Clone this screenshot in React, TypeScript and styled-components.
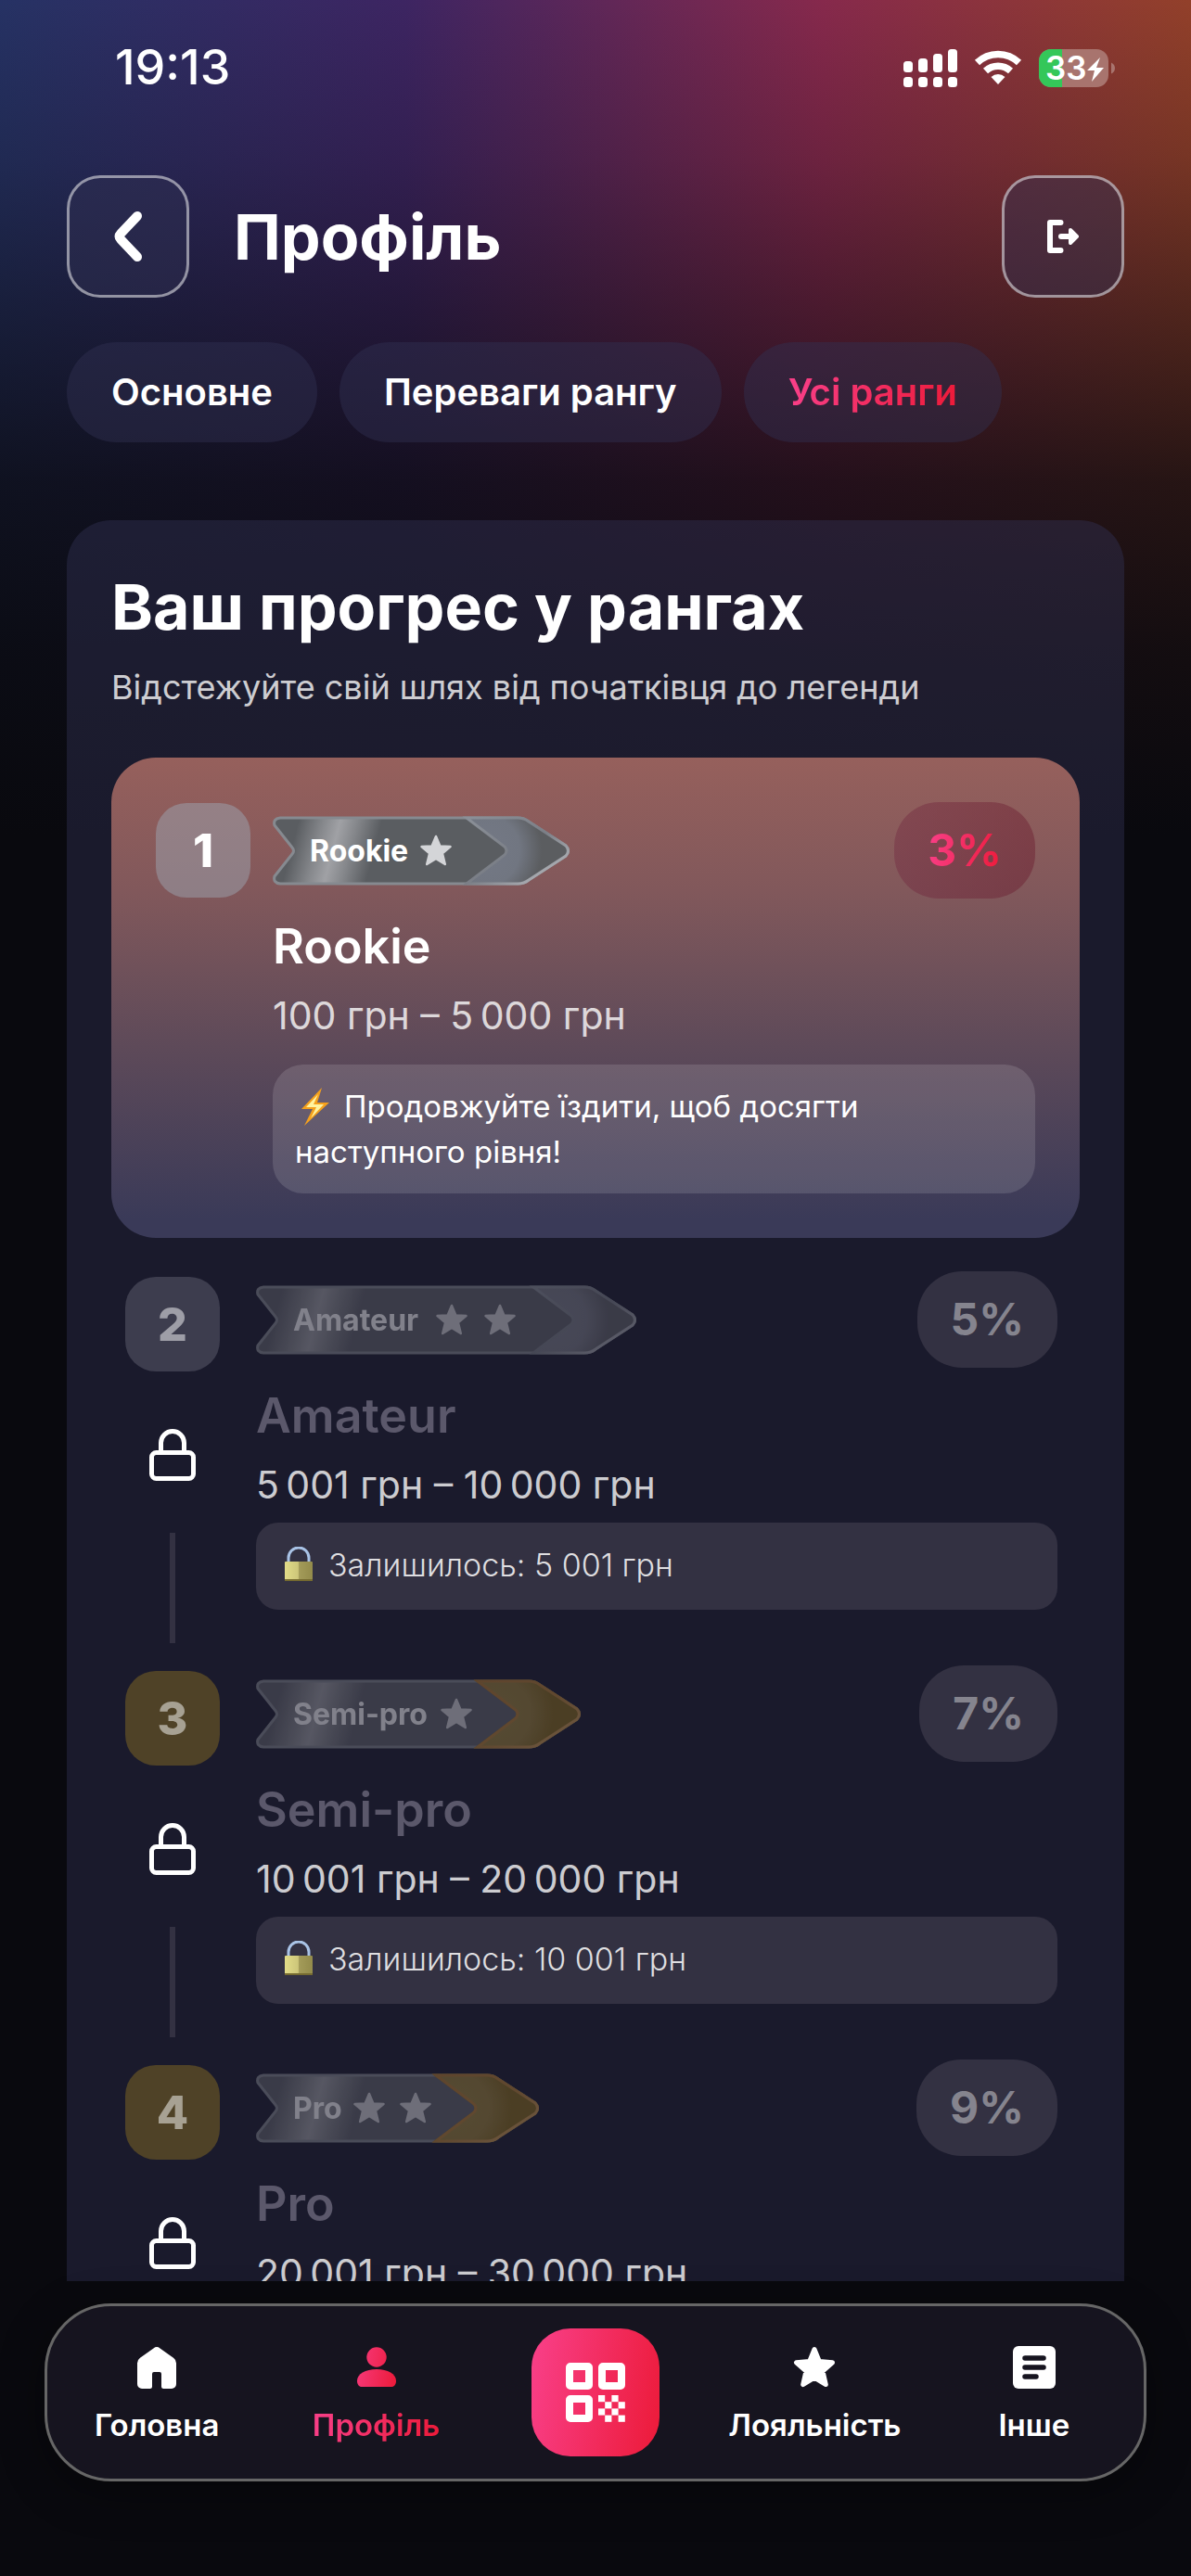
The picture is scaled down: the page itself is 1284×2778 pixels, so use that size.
import React from 'react';
import styled, { createGlobalStyle, css } from 'styled-components';

const GlobalStyle = createGlobalStyle`
  * { box-sizing: border-box; }
  body { margin: 0; background: #09090e; }
  button { font: inherit; color: inherit; border: 0; padding: 0; background: none; cursor: pointer; }
  h1, h2, h3, p, ul, ol { margin: 0; padding: 0; }
  ul, ol { list-style: none; }
`;

const glass = 'rgba(48, 48, 82, 0.45)';
const pinkGradient = 'linear-gradient(100deg, #f9408a 0%, #ec1a38 100%)';

const gradientText = css`
  background: ${pinkGradient};
  background-clip: text;
  -webkit-background-clip: text;
  color: transparent;
`;

const Screen = styled.div`
  height: 100vh;
  display: flex;
  flex-direction: column;
  overflow: hidden;
  color: #fff;
  font-family: Inter, 'Noto Sans', 'Liberation Sans', sans-serif;
  background:
    linear-gradient(
      to bottom,
      rgba(9, 9, 14, 0) 0,
      rgba(9, 9, 14, 0.2) 170px,
      rgba(9, 9, 14, 0.46) 320px,
      rgba(9, 9, 14, 0.79) 520px,
      rgba(9, 9, 14, 0.92) 700px,
      #09090e 900px
    ),
    linear-gradient(to right, #263264 0%, #3d2562 34%, #86294c 69%, #92402a 100%);
`;

const StatusBar = styled.div`
  flex: none;
  height: 146px;
  padding: 0 82px 0 124px;
  display: flex;
  align-items: center;
  justify-content: space-between;
`;

const Clock = styled.time`
  font-size: 52px;
  line-height: 60px;
  font-weight: 500;
`;

const StatusIcons = styled.div`
  display: flex;
  align-items: center;
  gap: 18px;
`;

const Header = styled.header`
  flex: none;
  display: flex;
  align-items: center;
  gap: 48px;
  padding: 43px 72px 48px;
`;

const IconButton = styled.button`
  width: 132px;
  height: 132px;
  display: grid;
  place-items: center;
  border: 3px solid rgba(255, 255, 255, 0.5);
  border-radius: 36px;
  background: ${glass};
`;

const Title = styled.h1`
  flex: 1;
  font-size: 68px;
  line-height: 80px;
  font-weight: 700;
`;

const Tabs = styled.nav`
  flex: none;
  display: flex;
  gap: 24px;
  padding: 0 72px;
`;

const Tab = styled.button`
  height: 108px;
  padding: 0 48px;
  border-radius: 54px;
  background: ${glass};
  font-size: 40px;
  line-height: 48px;
  font-weight: 600;
  white-space: nowrap;
`;

const TabLabel = styled.span<{ $active?: boolean }>`
  display: block;
  ${(p) => p.$active && gradientText}
`;

const Main = styled.main`
  flex: 1;
  min-height: 0;
  overflow-y: auto;
  scrollbar-width: none;
  padding: 84px 72px 0;
`;

const Panel = styled.section`
  padding: 48px;
  border-radius: 48px;
  background: ${glass};
`;

const PanelTitle = styled.h2`
  font-size: 68px;
  line-height: 90px;
  font-weight: 700;
`;

const PanelHint = styled.p`
  margin-top: 12px;
  font-size: 36px;
  line-height: 60px;
  color: rgba(255, 255, 255, 0.8);
`;

const RankList = styled.ol`
  margin-top: 46px;
  display: flex;
  flex-direction: column;
  gap: 24px;
`;

const RankItem = styled.li<{ $current?: boolean }>`
  display: flex;
  ${(p) =>
    p.$current
      ? css`
          gap: 24px;
          margin-bottom: 12px;
          padding: 48px;
          border-radius: 48px;
          background: linear-gradient(to bottom, #96605c 0%, #81585b 28%, #5e4a59 60%, #3a3a58 96%);
        `
      : css`
          gap: 39px;
          padding: 0 24px 0 15px;
        `}
`;

const RankAside = styled.div<{ $current?: boolean }>`
  flex: none;
  width: 102px;
  padding-top: ${(p) => (p.$current ? 1 : 6)}px;
  display: flex;
  flex-direction: column;
  align-items: center;
`;

const RankNumber = styled.span<{ $tone: 'silver' | 'gold'; $current?: boolean }>`
  width: 102px;
  height: 102px;
  display: grid;
  place-items: center;
  border-radius: 33px;
  font-size: 50px;
  line-height: 60px;
  font-weight: 800;
  color: ${(p) => (p.$current ? '#fff' : 'rgba(255, 255, 255, 0.5)')};
  background: ${(p) => (p.$current ? 'rgba(156, 163, 175, 0.5)' : p.$tone === 'gold' ? '#4f4227' : '#3d3d4e')};
`;

const LockSlot = styled.span`
  display: block;
  height: 56px;
  margin: 62px 0 56px;
`;

const Connector = styled.span`
  width: 6px;
  height: 119px;
  background: #333142;
`;

const RankBody = styled.div`
  flex: 1;
  min-width: 0;
`;

const RankTop = styled.div`
  height: 104px;
  display: flex;
  align-items: center;
  justify-content: space-between;
`;

const Discount = styled.span<{ $current?: boolean }>`
  height: 104px;
  padding: 0 36px;
  display: flex;
  align-items: center;
  border-radius: 48px;
  font-size: 48px;
  line-height: 60px;
  font-weight: 700;
  color: rgba(255, 255, 255, 0.42);
  background: ${(p) => (p.$current ? 'linear-gradient(100deg, rgba(115, 42, 66, 0.42), rgba(104, 22, 42, 0.42))' : '#333142')};
`;

const DiscountValue = styled.span<{ $current?: boolean }>`
  ${(p) => p.$current && gradientText}
`;

const RankName = styled.h3<{ $current?: boolean }>`
  margin-top: 22px;
  font-size: 52px;
  line-height: 60px;
  font-weight: 600;
  color: ${(p) => (p.$current ? '#fff' : '#5b586b')};
`;

const RankRange = styled.p`
  margin-top: 21px;
  font-size: 41px;
  line-height: 47px;
  color: rgba(255, 255, 255, 0.8);
`;

const CurrentNote = styled.p`
  margin-top: 29px;
  padding: 21px 24px 20px;
  border-radius: 33px;
  background: rgba(255, 255, 255, 0.13);
  font-size: 33px;
  line-height: 49px;
`;

const LockedNote = styled.p`
  margin-top: 17px;
  height: 94px;
  padding: 0 30px 4px;
  display: flex;
  align-items: center;
  gap: 16px;
  border-radius: 24px;
  background: #333142;
  font-size: 34px;
  line-height: 49px;
  font-weight: 300;
  color: rgba(255, 255, 255, 0.85);
`;

const BoltSvg = styled.svg`
  width: 44px;
  height: 44px;
  margin-right: 9px;
  vertical-align: -10px;
`;

const BadgeText = styled.text`
  font-family: Inter, 'Noto Sans', sans-serif;
  font-size: 32px;
  font-weight: 700;
`;

const BottomNav = styled.nav`
  flex: none;
  height: 192px;
  margin: 24px 48px 102px;
  display: grid;
  grid-template-columns: repeat(5, 1fr);
  align-items: center;
  justify-items: center;
  border: 3px solid #666;
  border-radius: 72px;
  background: #16141f;
  box-shadow: 0 12px 48px rgba(0, 0, 0, 0.35);
`;

const NavItem = styled.a`
  padding-top: 4px;
  display: flex;
  flex-direction: column;
  align-items: center;
  gap: 18px;
  color: #fff;
  text-decoration: none;
  font-size: 33px;
  line-height: 40px;
  font-weight: 600;
`;

const NavLabel = styled.span<{ $active?: boolean }>`
  ${(p) => p.$active && gradientText}
`;

const QrButton = styled.button`
  width: 138px;
  height: 138px;
  display: grid;
  place-items: center;
  border-radius: 42px;
  background: ${pinkGradient};
`;

const STAR =
  'M0 -15 L4.4 -4.6 L15.5 -3.9 L6.9 3.2 L9.8 15 L0 9 L-9.8 15 L-6.9 3.2 L-15.5 -3.9 L-4.4 -4.6 Z';

function Star({ x, y }: { x: number; y: number }) {
  return (
    <path d={STAR} transform={`translate(${x} ${y})`} fill="#d4d5d8" stroke="#d4d5d8" strokeWidth="2.5" strokeLinejoin="round" />
  );
}

interface RibbonProps {
  id: string;
  label: string;
  width: number;
  stars: number[];
  gold?: boolean;
  dim?: boolean;
}

function Ribbon({ id, label, width: w, stars, gold, dim }: RibbonProps) {
  const base = dim ? '#62646b' : '#5a5d61';
  const outline = `M8 2 H${w - 56} Q${w - 49} 2 ${w - 44} 6 L${w - 4} 32 Q${w + 1} 37.5 ${w - 4} 43 L${w - 44} 69 Q${w - 49} 73 ${w - 56} 73 H8 Q0 72 2 65 L21 41 Q24 37.5 21 34 L2 10 Q0 3 8 2 Z`;
  const tip = `M${w - 111} 2 H${w - 56} Q${w - 49} 2 ${w - 44} 6 L${w - 4} 32 Q${w + 1} 37.5 ${w - 4} 43 L${w - 44} 69 Q${w - 49} 73 ${w - 56} 73 H${w - 111} L${w - 70} 42 Q${w - 66} 37.5 ${w - 70} 33 Z`;
  return (
    <svg width={w} height="75" viewBox={`0 0 ${w} 75`} opacity={dim ? 0.45 : 1} role="img" aria-label={label}>
      <defs>
        <linearGradient id={`${id}-body`} gradientUnits="userSpaceOnUse" x1="22" y1="28" x2="106" y2="50">
          <stop offset="0" stopColor={base} />
          <stop offset="0.3" stopColor="#86888c" />
          <stop offset="0.5" stopColor="#a0a1a5" />
          <stop offset="0.7" stopColor="#86888c" />
          <stop offset="1" stopColor={base} />
        </linearGradient>
        <radialGradient id={`${id}-tip`} gradientUnits="userSpaceOnUse" cx={w - 92} cy="37" r="62">
          <stop offset="0" stopColor={gold ? '#a0863c' : dim ? '#80828c' : '#747986'} />
          <stop offset="0.62" stopColor={gold ? '#9a8038' : dim ? '#7b7d87' : '#717681'} />
          <stop offset="1" stopColor={gold ? '#886b1c' : dim ? '#626369' : '#5b5d60'} />
        </radialGradient>
        <linearGradient id={`${id}-edge`} x1="0" y1="0" x2="1" y2="1">
          <stop offset="0" stopColor={gold ? '#b27a30' : '#8b9098'} />
          <stop offset="0.5" stopColor={gold ? '#b68034' : '#7b7f87'} />
          <stop offset="1" stopColor={gold ? '#d8a860' : '#c4c6ca'} />
        </linearGradient>
      </defs>
      <path d={outline} fill={`url(#${id}-body)`} stroke="#868a90" strokeWidth="3" />
      {gold && <path d={tip} fill="#886b1c" stroke="#886b1c" strokeWidth="3" />}
      <path d={tip} fill={`url(#${id}-tip)`} stroke={`url(#${id}-edge)`} strokeWidth="3" />
      <BadgeText x="40" y="49" fill="#fff">
        {label}
      </BadgeText>
      {stars.map((x) => (
        <Star key={x} x={x} y={37} />
      ))}
    </svg>
  );
}

function PadlockOutline() {
  return (
    <svg width="50" height="56" viewBox="0 0 50 56" fill="none" stroke="#fff" strokeWidth="5">
      <rect x="2.5" y="25.5" width="45" height="28" rx="5" />
      <path d="M12.5 25V15a12.5 12.5 0 0 1 25 0v10" />
    </svg>
  );
}

function GoldPadlock() {
  return (
    <svg width="32" height="38" viewBox="0 0 32 38">
      <defs>
        <linearGradient id="padlock-body" x1="0" x2="1" y1="0" y2="0">
          <stop offset="0" stopColor="#e2dc88" />
          <stop offset="0.48" stopColor="#cdc67a" />
          <stop offset="0.52" stopColor="#a39b59" />
          <stop offset="1" stopColor="#938b4b" />
        </linearGradient>
      </defs>
      <path d="M5 17V12a10.5 10.5 0 0 1 22 0v5" fill="none" stroke="#a9c3e6" strokeWidth="3" />
      <rect x="1" y="16" width="30" height="21" rx="1" fill="url(#padlock-body)" />
      <rect x="1" y="35" width="30" height="2" fill="#756a30" />
    </svg>
  );
}

function Bolt() {
  return (
    <BoltSvg viewBox="0 0 44 44" aria-label="⚡">
      <path d="M29 2 7 25h12l-9 18 27-25H24Z" fill="#f5a11c" />
      <path d="M25 9 12 23h11l-6 12 14-15H20Z" fill="#fff3a0" />
    </BoltSvg>
  );
}

interface Rank {
  name: string;
  range: string;
  discount: string;
  current?: boolean;
  left?: string;
  width: number;
  stars: number[];
  tone: 'silver' | 'gold';
}

const ranks: Rank[] = [
  { name: 'Rookie', range: '100 грн – 5\u202f000 грн', discount: '3%', current: true, width: 320, stars: [176], tone: 'silver' },
  { name: 'Amateur', range: '5\u202f001 грн – 10\u202f000 грн', discount: '5%', left: '5 001 грн', width: 410, stars: [211, 263], tone: 'silver' },
  { name: 'Semi-pro', range: '10\u202f001 грн – 20\u202f000 грн', discount: '7%', left: '10 001 грн', width: 350, stars: [216], tone: 'gold' },
  { name: 'Pro', range: '20\u202f001 грн – 30\u202f000 грн', discount: '9%', width: 305, stars: [122, 172], tone: 'gold' },
];

function RankRow({ rank, index }: { rank: Rank; index: number }) {
  const { current } = rank;
  return (
    <RankItem $current={current}>
      <RankAside $current={current}>
        <RankNumber $tone={rank.tone} $current={current}>
          {index + 1}
        </RankNumber>
        {!current && (
          <>
            <LockSlot>
              <PadlockOutline />
            </LockSlot>
            <Connector />
          </>
        )}
      </RankAside>
      <RankBody>
        <RankTop>
          <Ribbon
            id={`ribbon-${index}`}
            label={rank.name}
            width={rank.width}
            stars={rank.stars}
            gold={rank.tone === 'gold'}
            dim={!current}
          />
          <Discount $current={current}>
            <DiscountValue $current={current}>{rank.discount}</DiscountValue>
          </Discount>
        </RankTop>
        <RankName $current={current}>{rank.name}</RankName>
        <RankRange>{rank.range}</RankRange>
        {current && (
          <CurrentNote>
            <Bolt />
            Продовжуйте їздити, щоб досягти наступного рівня!
          </CurrentNote>
        )}
        {rank.left && (
          <LockedNote>
            <GoldPadlock />
            Залишилось: {rank.left}
          </LockedNote>
        )}
      </RankBody>
    </RankItem>
  );
}

function SignalIcon() {
  return (
    <svg width="58" height="41" viewBox="0 0 58 41" fill="#fff">
      {[0, 16, 32, 48].map((x, i) => {
        const top = [13, 10, 5, 0][i];
        return (
          <g key={x}>
            <rect x={x} y={top} width="10" height={25 - top} rx="3.5" />
            <rect x={x} y="30" width="10" height="11" rx="3.5" />
          </g>
        );
      })}
    </svg>
  );
}

function WifiIcon() {
  return (
    <svg width="52" height="38" viewBox="0 0 52 38" fill="none" stroke="#fff" strokeWidth="7.5">
      <path d="M3.5 13.5a32.5 32.5 0 0 1 45 0" />
      <path d="M12.5 22.5a20 20 0 0 1 27 0" />
      <path d="M18.5 29a11 11 0 0 1 15 0L26 37Z" fill="#fff" stroke="none" />
    </svg>
  );
}

function BatteryIcon() {
  return (
    <svg width="82" height="41" viewBox="0 0 82 41">
      <defs>
        <clipPath id="battery-shell">
          <rect width="75" height="41" rx="13" />
        </clipPath>
      </defs>
      <g clipPath="url(#battery-shell)">
        <rect width="75" height="41" fill="#a8746e" />
        <rect width="25" height="41" fill="#34c759" />
      </g>
      <path d="M78 14.5q4 2 4 6t-4 6Z" fill="#a8746e" />
      <text x="7" y="33" fill="#fff" fontFamily="Inter, sans-serif" fontSize="35" fontWeight="600">
        33
      </text>
      <path d="M66 9 52 23h8l-3 12 13-15h-8Z" fill="#fff" />
    </svg>
  );
}

function QrIcon() {
  return (
    <svg width="64" height="64" viewBox="0 0 64 64" fill="#fff">
      {[[0, 0], [35, 0], [0, 35]].map(([x, y]) => (
        <rect key={`${x}-${y}`} x={x + 4} y={y + 4} width="21" height="21" rx="1" fill="none" stroke="#fff" strokeWidth="8" strokeLinejoin="round" />
      ))}
      {[0, 1, 2, 3].map((row) =>
        [0, 2].map((c) => {
          const col = c + (row % 2);
          return <rect key={`${row}${col}`} x={35 + col * 7.2} y={35 + row * 7.2} width="7.2" height="7.2" />;
        }),
      )}
    </svg>
  );
}

export default function App() {
  return (
    <Screen>
      <GlobalStyle />
      <StatusBar>
        <Clock>19:13</Clock>
        <StatusIcons>
          <SignalIcon />
          <WifiIcon />
          <BatteryIcon />
        </StatusIcons>
      </StatusBar>

      <Header>
        <IconButton aria-label="Назад">
          <svg width="34" height="56" viewBox="0 0 34 56" fill="none" stroke="#fff" strokeWidth="10" strokeLinecap="round" strokeLinejoin="round">
            <path d="M27 6 9 25q-3 3 0 6l18 19" />
          </svg>
        </IconButton>
        <Title>Профіль</Title>
        <IconButton aria-label="Вийти">
          <svg width="36" height="38" viewBox="0 0 36 38" fill="none" stroke="#fff" strokeWidth="6" strokeLinecap="round" strokeLinejoin="round">
            <path d="M15.5 4H4v30h11.5" />
            <path d="M16 19h11" />
            <path d="M26 12l7 7-7 7Z" fill="#fff" strokeWidth="4" />
          </svg>
        </IconButton>
      </Header>

      <Tabs>
        <Tab>
          <TabLabel>Основне</TabLabel>
        </Tab>
        <Tab>
          <TabLabel>Переваги рангу</TabLabel>
        </Tab>
        <Tab aria-current="page">
          <TabLabel $active>Усі ранги</TabLabel>
        </Tab>
      </Tabs>

      <Main>
        <Panel>
          <PanelTitle>Ваш прогрес у рангах</PanelTitle>
          <PanelHint>Відстежуйте свій шлях від початківця до легенди</PanelHint>
          <RankList>
            {ranks.map((rank, index) => (
              <RankRow key={rank.name} rank={rank} index={index} />
            ))}
          </RankList>
        </Panel>
      </Main>

      <BottomNav>
        <NavItem href="#home">
          <svg width="48" height="48" viewBox="0 0 48 48" fill="#fff">
            <path d="M20.500 3.400Q24 .8 27.500 3.400L42 13.800q3 2.200 3 5.700V42a5 5 0 0 1-5 5h-8.500a2.500 2.500 0 0 1-2.500-2.500V31q0-2-2-2h-6q-2 0-2 2v13.500a2.500 2.500 0 0 1-2.500 2.500H8a5 5 0 0 1-5-5V19.500q0-3.500 3-5.700Z" />
          </svg>
          <NavLabel>Головна</NavLabel>
        </NavItem>
        <NavItem href="#profile" aria-current="page">
          <svg width="48" height="48" viewBox="0 0 48 48" fill="url(#person-fill)">
            <defs>
              <linearGradient id="person-fill" gradientUnits="userSpaceOnUse" x1="-8" y1="10" x2="50" y2="20">
                <stop offset="0" stopColor="#f9408a" />
                <stop offset="1" stopColor="#ec1a38" />
              </linearGradient>
            </defs>
            <circle cx="24" cy="13" r="10.7" />
            <path d="M24 26c12 0 21 5 21 12.500 0 4-2 6.500-5 6.500H8c-3 0-5-2.500-5-6.500C3 31 12 26 24 26Z" />
          </svg>
          <NavLabel $active>Профіль</NavLabel>
        </NavItem>
        <QrButton aria-label="QR-код">
          <QrIcon />
        </QrButton>
        <NavItem href="#loyalty">
          <svg width="48" height="48" viewBox="0 0 48 48" fill="#fff" stroke="#fff" strokeWidth="5" strokeLinejoin="round">
            <path d="M24 4.500l5.300 13L43.500 18.800 33 28l3.300 14.500L24 35.200 11.700 42.500 15 28 4.500 18.800l14.200-1.300Z" />
          </svg>
          <NavLabel>Лояльність</NavLabel>
        </NavItem>
        <NavItem href="#more">
          <svg width="48" height="48" viewBox="0 0 48 48">
            <rect x="1" y="1" width="46" height="46" rx="6" fill="#fff" />
            <path d="M14 14h20M14 24h20M14 34h12" stroke="#16141f" strokeWidth="5.5" strokeLinecap="round" />
          </svg>
          <NavLabel>Інше</NavLabel>
        </NavItem>
      </BottomNav>
    </Screen>
  );
}
